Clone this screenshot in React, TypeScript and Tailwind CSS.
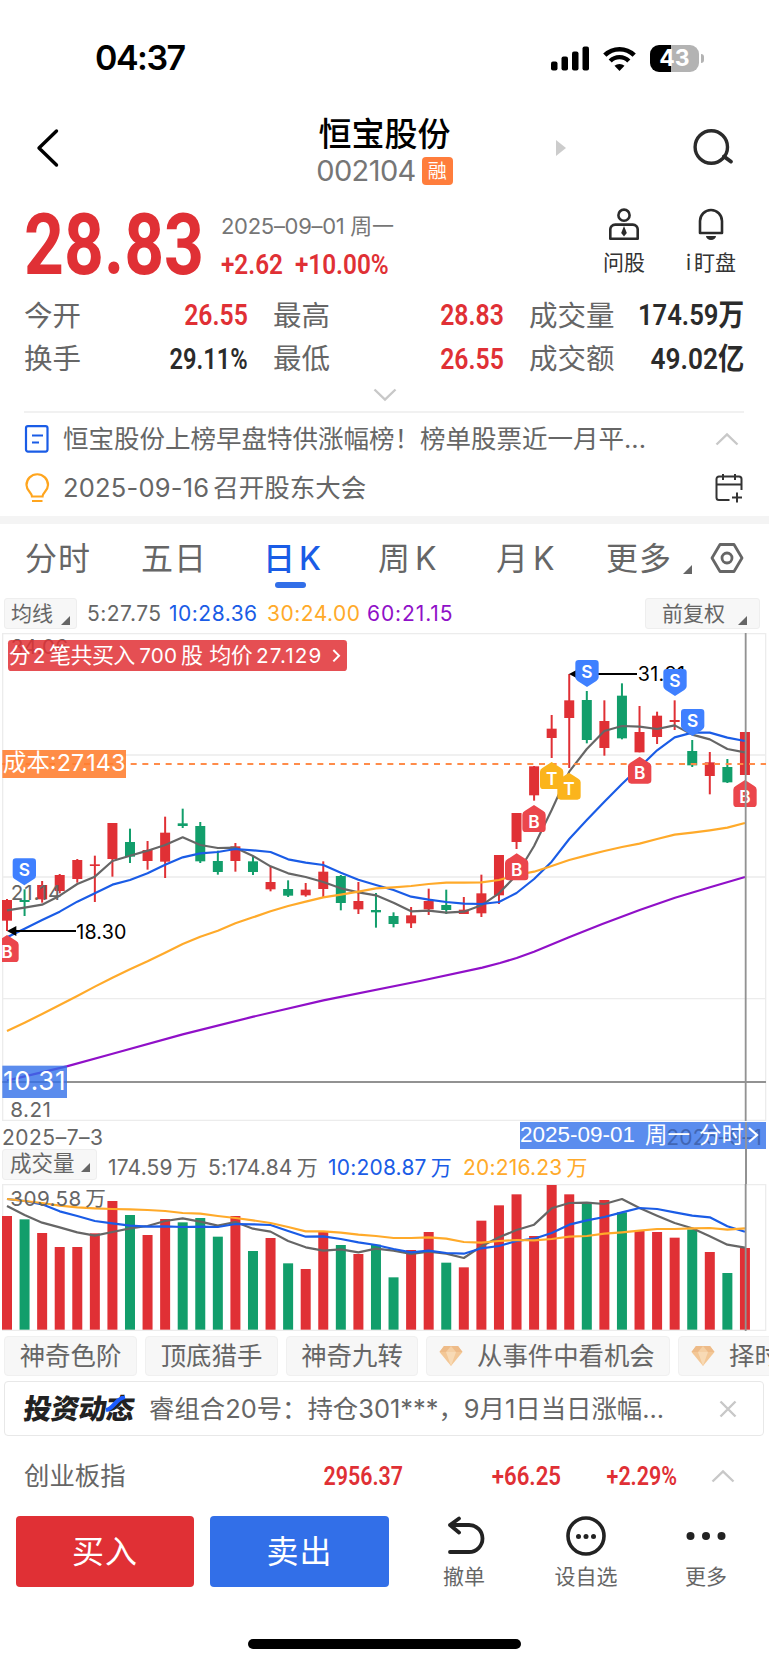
import type { ReactNode } from "react";
import clsx from "clsx";

/* ------------------------------------------------------------------ */
/*  Chart data                                                          */
/* ------------------------------------------------------------------ */

const RED = "#e03035";
const GREEN = "#129e6b";
const GRAY = "#666666";
const BLUE = "#1a5ce6";
const ORANGE = "#ffaa2a";
const PURPLE = "#9010c8";

const FIRST_X = 21;
const STEP = 52.71;

// [rising, high, bodyTop, bodyBottom, low]
type Candle = [number, number, number, number, number];

const candles: Candle[] = [
  [1, 477, 480, 542, 573],
  [0, 448, 480, 486, 528],
  [1, 423, 435, 478, 488],
  [1, 402, 405, 453, 460],
  [1, 357, 360, 417, 428],
  [1, 347, 373, 378, 486],
  [1, 249, 249, 357, 410],
  [0, 266, 306, 350, 369],
  [1, 303, 330, 363, 389],
  [1, 230, 278, 365, 414],
  [0, 206, 250, 258, 264],
  [0, 246, 258, 364, 369],
  [0, 332, 363, 396, 404],
  [1, 309, 319, 363, 395],
  [0, 348, 364, 396, 405],
  [1, 378, 426, 448, 454],
  [0, 421, 447, 467, 471],
  [1, 429, 449, 466, 470],
  [1, 364, 395, 447, 472],
  [0, 405, 408, 489, 511],
  [1, 426, 483, 508, 522],
  [0, 459, 510, 517, 563],
  [0, 517, 528, 552, 562],
  [1, 501, 526, 550, 564],
  [1, 446, 483, 508, 525],
  [0, 449, 495, 510, 522],
  [1, 471, 509, 522, 522],
  [1, 404, 460, 520, 531],
  [1, 345, 345, 466, 492],
  [1, 219, 219, 306, 327],
  [1, 78, 79, 166, 182],
  [1, -75, -34, -6, 54],
  [1, -198, -119, -66, 84],
  [0, -147, -120, 0, 10],
  [1, -119, -57, 24, 47],
  [0, -170, -133, -5, -2],
  [1, -102, -24, 37, 37],
  [1, -85, -73, -9, 12],
  [1, -119, -60, -54, -30],
  [0, 0, 33, 76, 81],
  [1, 36, 67, 108, 163],
  [0, 57, 81, 127, 129],
  [1, -24, -24, 105, 105],
];

const ma5 = [
  511, 503, 494, 467, 432, 410, 363, 347, 332, 315, 292, 315, 324, 323, 348, 379, 400, 411, 426, 445, 457, 466,
  488, 514, 512, 518, 515, 496, 460, 405, 318, 210, 95, 27, -27, -42, -40, -33, -44, -16, -2, 27, 37,
];
const ma10 = [
  592, 566, 540, 515, 485, 460, 434, 420, 400, 374, 352, 340, 336, 327, 331, 336, 358, 368, 375, 398, 419, 435,
  450, 470, 479, 486, 491, 492, 486, 459, 417, 365, 297, 240, 185, 132, 82, 31, -8, -22, -22, -7, 3,
];
const ma30 = [
  873, 848, 822, 795, 768, 740, 713, 688, 664, 638, 612, 590, 572, 550, 532, 514, 498, 485, 472, 464, 455, 445,
  442, 438, 432, 428, 428, 427, 420, 405, 395, 378, 360, 346, 333, 321, 311, 297, 284, 278, 271, 263, 249,
];
const ma60 =
  "21,1022 200,979 335,942 548,883 760,830 970,781 1260,723 1447,683 1500,669 1550,654 1602,635 1707,592 1807,552 1919,510 2025,473 2130,442 2235,411";

const volumes = [
  498, 508, 549, 591, 591, 550, 453, 495, 555, 507, 517, 504, 560, 498, 603, 564, 640, 657, 546, 585, 612, 584,
  682, 600, 546, 638, 652, 512, 466, 433, 558, 405, 433, 460, 450, 487, 541, 546, 563, 538, 606, 669, 594,
];
const vol5 = [
  468, 495, 518, 532, 547, 557, 546, 535, 528, 513, 505, 515, 527, 516, 536, 545, 573, 592, 602, 598, 607, 596,
  602, 612, 605, 611, 624, 589, 562, 540, 524, 475, 459, 458, 462, 447, 474, 497, 519, 535, 559, 584, 593,
];
const vol10 = [
  447, 453, 463, 484, 498, 513, 520, 527, 530, 529, 531, 530, 531, 522, 523, 525, 543, 560, 559, 567, 577, 585,
  597, 607, 602, 609, 611, 595, 588, 573, 566, 549, 524, 511, 501, 487, 474, 477, 487, 497, 502, 529, 545,
];
const vol20 = [
  447, 453, 459, 467, 472, 475, 477, 478, 480, 483, 489, 491, 498, 504, 511, 519, 531, 544, 544, 548, 554, 558,
  564, 564, 562, 566, 576, 578, 573, 570, 571, 567, 560, 558, 551, 547, 542, 537, 537, 535, 534, 539, 535,
];

const markers = [
  { x: 1761, y: -240, kind: "S" },
  { x: 2025, y: -213, kind: "S" },
  { x: 2078, y: -93, kind: "S" },
  { x: 73, y: 355, kind: "S" },
  { x: 21, y: 585, kind: "B" },
  { x: 1550, y: 340, kind: "B" },
  { x: 1602, y: 195, kind: "B" },
  { x: 1919, y: 50, kind: "B" },
  { x: 2235, y: 120, kind: "B" },
  { x: 1655, y: 66, kind: "T" },
  { x: 1707, y: 98, kind: "T" },
];

const xAt = (i: number) => FIRST_X + i * STEP;
const toPoints = (values: number[]) => values.map((v, i) => `${xAt(i).toFixed(1)},${v}`).join(" ");

/* ------------------------------------------------------------------ */
/*  Small pieces                                                        */
/* ------------------------------------------------------------------ */

// Condensed numerals used for prices
function Num({ children, className }: { children: ReactNode; className?: string }) {
  return (
    <span
      className={clsx(
        "inline-block whitespace-nowrap font-[Roboto,'Noto_Sans_CJK_SC',sans-serif] leading-none",
        className,
      )}
    >
      {children}
    </span>
  );
}

function Corner({ className }: { className?: string }) {
  return (
    <svg viewBox="0 0 9 9" className={clsx("h-[9px] w-[9px] fill-[#666]", className)}>
      <path d="M9 0v9H0z" />
    </svg>
  );
}

function Chevron({ down, className }: { down?: boolean; className?: string }) {
  return (
    <svg viewBox="0 0 24 14" fill="none" stroke="#c8c8c8" strokeWidth="2.400" className={clsx("h-[14px] w-6", className)}>
      <path d={down ? "M1.500 1.500 12 11.500 22.500 1.500" : "M1.500 12.500 12 2.500 22.500 12.500"} />
    </svg>
  );
}

function Gem() {
  return (
    <svg viewBox="0 0 24 22" className="h-[22px] w-6 shrink-0">
      <path d="M5 1h14l4.500 6L12 21 .5 7z" fill="#f3c796" />
      <path d="M5 1h14l4.500 6H.5z" fill="#eebb88" />
      <path d="M7 7h10l-5 14z" fill="#f8dab5" />
      <path d="M7 7l5-6 5 6z" fill="#f5cfa3" />
    </svg>
  );
}

function Marker({ x, y, kind }: { x: number; y: number; kind: string }) {
  const sell = kind === "S";
  const fill = sell ? "#3f80ff" : kind === "B" ? "#eb464c" : "#fbb41c";
  const d = sell
    ? "M-25 0H25Q35 0 35 10V52Q35 59 28 63L0 81L-28 63Q-35 59-35 52V10Q-35 0-25 0Z"
    : "M-25 81H25Q35 81 35 71V29Q35 22 28 18L0 0L-28 18Q-35 22-35 29V71Q-35 81-25 81Z";
  return (
    <g transform={`translate(${x} ${y})`}>
      <path d={d} fill={fill} />
      <text y={sell ? 53 : 68} textAnchor="middle" fontSize="52" fontWeight="600" fill="#fff">
        {kind}
      </text>
    </g>
  );
}

/* ------------------------------------------------------------------ */
/*  Header                                                              */
/* ------------------------------------------------------------------ */

function StatusBar() {
  return (
    <div className="flex h-[112px] shrink-0 items-center justify-between pt-1 pr-[70px] pl-[95px] text-black">
      <span className="text-[34px] leading-none font-semibold tracking-[-1.500px]">04:37</span>
      <div className="flex items-center">
        <svg viewBox="0 0 38 25" className="h-[25px] w-[38px]">
          <rect x="0" y="15.500" width="6.500" height="9" rx="2" />
          <rect x="10.500" y="10.500" width="6.500" height="14" rx="2" />
          <rect x="21" y="5.500" width="6.500" height="19" rx="2" />
          <rect x="31.500" y="0.500" width="6.500" height="24" rx="2" />
        </svg>
        <svg viewBox="0 0 33 25" fill="none" stroke="#000" className="ml-[14px] h-[25px] w-[33px]">
          <path d="M1.800 9.200A21 21 0 0 1 31.200 9.200" strokeWidth="4.600" />
          <path d="M7.200 15A13 13 0 0 1 25.800 15" strokeWidth="4.400" />
          <path d="M16.500 25l-5-5.200a7.500 7.500 0 0 1 10 0z" fill="#000" stroke="none" />
        </svg>
        <div className="relative ml-[14px] flex h-[27px] w-[49px] items-center justify-center rounded-[9px] bg-[linear-gradient(90deg,#000_43%,#b3b3b3_43%)] text-[23px] leading-none font-bold text-white">
          43
          <span className="absolute top-[9px] -right-[5px] h-[9px] w-[3px] rounded-r-full bg-[#b3b3b3]" />
        </div>
      </div>
    </div>
  );
}

function TitleBar() {
  return (
    <div className="relative flex h-[84px] shrink-0 flex-col items-center">
      <svg viewBox="0 0 24 40" fill="none" stroke="#000" className="absolute top-4 left-[36px] h-10 w-6">
        <path d="M20.500 3 3 20l17.500 17" strokeWidth="3.400" strokeLinecap="round" strokeLinejoin="round" />
      </svg>
      <h1 className="mt-[3px] text-[33px] leading-[38px] font-medium text-black">恒宝股份</h1>
      <div className="mt-[4px] flex items-center gap-[6px]">
        <span className="text-[29px] leading-7 tracking-[-0.600px] text-[#767676]">002104</span>
        <span className="flex h-7 w-[31px] items-center justify-center rounded-[4px] bg-[#ff7d3c] text-[19px] leading-none text-white">
          融
        </span>
      </div>
      <svg viewBox="0 0 10 16" className="absolute top-[28px] left-[556px] h-4 w-[10px] fill-[#ccc]">
        <path d="M0 0l10 8-10 8z" />
      </svg>
      <svg viewBox="0 0 40 38" fill="none" stroke="#2b2b2b" className="absolute top-[16px] left-[693px] h-[38px] w-10">
        <circle cx="18.300" cy="19" r="16.200" strokeWidth="3.400" />
        <path d="M31 28.500l6.800 5" strokeWidth="4" strokeLinecap="round" />
      </svg>
    </div>
  );
}

function Quote() {
  const stats = [
    { label: "今开", value: "26.55", red: true },
    { label: "最高", value: "28.83", red: true },
    { label: "成交量", value: "174.59万" },
    { label: "换手", value: "29.11%" },
    { label: "最低", value: "26.55", red: true },
    { label: "成交额", value: "49.02亿" },
  ];

  return (
    <section className="h-[215px] shrink-0 px-6 pt-[10px]">
      <div className="flex h-[88px]">
        <Num className="-mt-[4px] w-[197px] origin-left scale-x-[0.81] text-[86px] font-bold text-[#e03035]">28.83</Num>
        <div className="flex flex-col pt-[9px]">
          <span className="text-[22px] leading-[22px] tracking-[-0.300px] whitespace-pre text-[#767676]">
            2025–09–01 周一
          </span>
          <Num className="mt-[15px] origin-left scale-x-[0.9] text-[27px] font-semibold text-[#e03035]">
            +2.62&nbsp; +10.00%
          </Num>
        </div>
        <div className="mr-[4px] ml-auto flex text-[21px] leading-6 text-[#333]">
          <div className="flex w-[60px] flex-col items-center">
            <svg viewBox="0 0 30 32" fill="none" stroke="#2b2b2b" strokeWidth="2.600" className="mt-[2px] h-8 w-[30px]">
              <circle cx="15" cy="7.200" r="5.600" />
              <path d="M1.300 30.700V22a5 5 0 0 1 5-5.400h17.400a5 5 0 0 1 5 5.400v8.700z" strokeLinejoin="round" />
              <path d="M15 18l2.800 7-2.800 3.500-2.800-3.500z" fill="#2b2b2b" stroke="none" />
            </svg>
            <span className="mt-[11px]">问股</span>
          </div>
          <div className="ml-[27px] flex w-[60px] flex-col items-center">
            <svg viewBox="0 0 26 32" fill="none" stroke="#2b2b2b" strokeWidth="2.600" className="mt-[2px] h-8 w-[26px]">
              <path d="M2 25V13a11 11 0 0 1 22 0v12z" strokeLinejoin="round" />
              <path d="M8 28h10a5 4 0 0 1-10 0z" fill="#2b2b2b" stroke="none" />
            </svg>
            <span className="mt-[11px] whitespace-nowrap">
              <span className="mr-[3px]">i</span>盯盘
            </span>
          </div>
        </div>
      </div>

      <div className="grid grid-cols-[224px_231px_215px] gap-x-[25px] text-[28.500px]">
        {stats.map((s) => (
          <div key={s.label} className="flex h-[43.500px] items-center justify-between leading-none text-[#666]">
            <span>{s.label}</span>
            <Num
              className={clsx(
                "origin-right text-[29.500px] font-semibold",
                s.red ? "scale-x-[0.84] text-[#e03035]" : "text-[#2b2b2b]",
                s.value.endsWith("%") && "scale-x-[0.8]",
                s.value.endsWith("万") && "scale-x-[0.87]",
                s.value.endsWith("亿") && "scale-x-[0.89]",
              )}
            >
              {s.value}
            </Num>
          </div>
        ))}
      </div>
      <Chevron down className="mx-auto mt-[7px]" />
    </section>
  );
}

function Notices() {
  return (
    <>
      <div className="ml-6 flex h-[105px] w-[720px] shrink-0 flex-col border-t-2 border-[#f1f1f1] text-[25.500px] leading-none text-[#666]">
        <div className="flex h-[51px] items-center pr-[5px]">
          <svg viewBox="0 0 26 28" fill="none" stroke="#1a5ce6" strokeWidth="2.200" className="h-7 w-[26px]">
            <rect x="2" y="1.100" width="21.500" height="25.500" rx="2" />
            <path d="M8 10.500h11M8 17.500h7" />
          </svg>
          <span className="ml-[13px]">恒宝股份上榜早盘特供涨幅榜！榜单股票近一月平...</span>
          <Chevron className="ml-auto" />
        </div>
        <div className="flex h-[47px] items-center">
          <svg viewBox="0 0 26 30" fill="none" stroke="#ffa51e" strokeWidth="2.200" className="h-[30px] w-[26px]">
            <path d="M8 23.500c0-4-5.500-5.500-5.500-11.500a10.700 10.700 0 0 1 21.500 0c0 6-5.500 7.500-5.500 11.500zM8 28h10.500" />
          </svg>
          <span className="ml-[13px] tracking-[0.200px]">2025-09-16</span>
          <span className="ml-[4px]">召开股东大会</span>
          <svg viewBox="0 0 28 30" fill="none" stroke="#333" strokeWidth="2" className="mr-px ml-auto h-[30px] w-7">
            <path d="M14.500 27H4a2.500 2.500 0 0 1-2.500-2.500V6A2.500 2.500 0 0 1 4 3.500h20A2.500 2.500 0 0 1 26.500 6v11M1.500 11.500h25M8 1v6M20 1v6M17 24.500h10M22 19.500v10" />
          </svg>
        </div>
      </div>
      <div className="h-[8px] shrink-0 bg-[#f4f4f4]" />
    </>
  );
}

/* ------------------------------------------------------------------ */
/*  Chart                                                               */
/* ------------------------------------------------------------------ */

function Tabs() {
  const tab = "text-[32px] leading-none tracking-[1px] text-[#666]";
  return (
    <nav className="flex h-[74px] shrink-0 items-start pt-[19px] pl-[25px]">
      <span className={clsx(tab, "w-[116px]")}>分时</span>
      <span className={clsx(tab, "w-[122px]")}>五日</span>
      <span className="flex w-[115px] flex-col text-[32px] leading-none font-medium text-[#1a5ce6]">
        <span className="flex gap-[4px]">
          <span>日</span>
          <span>K</span>
        </span>
        <i className="mt-[7px] ml-[12px] h-[6px] w-[31px] rounded-full bg-[#326fe8]" />
      </span>
      <span className={clsx(tab, "flex w-[118px] gap-[4px]")}>
        <span>周</span>
        <span>K</span>
      </span>
      <span className={clsx(tab, "flex w-[110px] gap-[4px]")}>
        <span>月</span>
        <span>K</span>
      </span>
      <span className={clsx(tab, "w-[66px]")}>更多</span>
      <Corner className="mt-[22px] ml-[11px]" />
      <svg viewBox="0 0 34 32" fill="none" stroke="#666" strokeWidth="2.800" className="mt-[-1px] ml-[18px] h-8 w-[34px]">
        <path d="M10 2.500h14L32 16l-8 13.500H10L2 16z" strokeLinejoin="round" />
        <circle cx="17" cy="16" r="5" />
      </svg>
    </nav>
  );
}

function AverageBar() {
  return (
    <div className="flex h-[35px] shrink-0 items-start pr-[9px] pl-1">
      <div className="flex h-[31px] w-[73px] items-center rounded-[3px] border border-[#eee] bg-[#f7f7f7] pl-[6px] text-[21px] leading-none text-[#666]">
        均线
        <Corner className="mt-[14px] ml-[8px]" />
      </div>
      <div className="flex h-[31px] items-center text-[21px] leading-none tracking-[0.500px]">
        <span className="ml-[10px] w-[82px] text-[#666]">5:27.75</span>
        <span className="w-[98px] text-[#1a5ce6]">10:28.36</span>
        <span className="w-[100px] text-[#ffaa2a]">30:24.00</span>
        <span className="tracking-[0.900px] text-[#9010c8]">60:21.15</span>
      </div>
      <div className="ml-auto flex h-[31px] w-[115px] items-center rounded-[3px] border border-[#eee] bg-[#f7f7f7] pl-[16px] text-[21px] leading-none text-[#666]">
        前复权
        <Corner className="mt-[14px] ml-[13px]" />
      </div>
    </div>
  );
}

function PriceChart() {
  return (
    <svg viewBox="0 -321 2307 1464" className="block h-[488px] w-[769px] shrink-0">
      <clipPath id="plot">
        <rect x="6" y="-321" width="2292" height="1464" />
      </clipPath>
      <g stroke="#ececec" strokeWidth="4" fill="none">
        <path d="M7-319H2298M7 45H2298M7 411H2298M7 776H2298M7 1141H2298" />
        <path d="M8-321V1143M2297-321V1143" />
      </g>

      <g clipPath="url(#plot)">
        {candles.map(([up, high, top, bottom, low], i) => (
          <g key={i} fill={up ? RED : GREEN}>
            <rect x={xAt(i) - 3} y={high} width="6" height={low - high} />
            <rect x={xAt(i) - 15} y={top} width="30" height={bottom - top} />
          </g>
        ))}
        <g fill="none" strokeWidth="6.500" strokeLinejoin="round">
          <polyline points={toPoints(ma5)} stroke={GRAY} />
          <polyline points={toPoints(ma10)} stroke={BLUE} />
          <polyline points={toPoints(ma30)} stroke={ORANGE} />
          <polyline points={ma60} stroke={PURPLE} />
        </g>
        <path d="M7 72H2298" stroke="#ff8c4a" strokeWidth="6" strokeDasharray="18 17" />
      </g>

      <g fontSize="59" fill="#000">
        <path d="M21 573l28-15v30zM45 570H228v6H45z" />
        <text x="229" y="597" textLength="150">18.30</text>
        <path d="M1707-198l28-15v30zM1730-201H1911v6H1730z" />
        <text x="1913" y="-176" textLength="142">31.91</text>
      </g>
      <g fontSize="62" fill="#666">
        <text x="32" y="-259" textLength="172">34.06</text>
        <text x="32" y="479" textLength="152">21.14</text>
        <text x="31" y="1132" textLength="122">8.21</text>
      </g>

      <g clipPath="url(#plot)">
        {markers.map((m, i) => (
          <Marker key={i} {...m} />
        ))}
      </g>
      <path d="M7 1026H2298M2237-321V1143" stroke="#929292" strokeWidth="5.500" />

      {/* price tags */}
      <rect x="24" y="-300" width="1017" height="93" rx="10" fill="#e03035" fillOpacity="0.85" />
      <g fontSize="66" fill="#fff">
        <text x="26" y="-230">分</text>
        <text x="98" y="-230" fontSize="62">2</text>
        <text x="147" y="-230" textLength="259">笔共买入</text>
        <text x="418" y="-230" fontSize="62" textLength="113">700</text>
        <text x="543" y="-230">股</text>
        <text x="628" y="-230" textLength="130">均价</text>
        <text x="768" y="-230" fontSize="62" textLength="196">27.129</text>
        <path d="M1000-270l17 17-17 17" fill="none" stroke="#fff" strokeWidth="6" />
      </g>
      <rect x="7" y="30" width="371" height="84" fill="#ff7d2e" fillOpacity="0.88" />
      <text x="9" y="94" fontSize="70" fill="#fff" textLength="367">成本:27.143</text>
      <rect x="7" y="977" width="194" height="97" fill="#326fe8" fillOpacity="0.8" />
      <text x="9" y="1051" fontSize="78" fill="#fff" textLength="188">10.31</text>
    </svg>
  );
}

function DateAxis() {
  return (
    <div className="flex h-7 shrink-0 items-center justify-between pr-[3px] pl-[2px] text-[21px] leading-none text-[#666]">
      <span className="pt-[4px] tracking-[0.500px]">2025–7–3</span>
      <div className="relative flex h-[27px] w-[246px] items-center bg-[#5b8dee] text-white">
        <span className="absolute top-[5px] right-[4px] tracking-[0.200px] text-[#4166b4]">2025–9–1</span>
        <span className="relative font-['Liberation_Sans','Noto_Sans_CJK_SC',sans-serif] text-[22.500px] whitespace-nowrap">
          2025-09-01
        </span>
        <span className="relative ml-[10px] text-[22.500px]">周一</span>
        <span className="relative ml-[9px] text-[22.500px]">分时</span>
        <svg viewBox="0 0 12 18" fill="none" stroke="#fff" strokeWidth="2.200" className="relative ml-[3px] h-[18px] w-3">
          <path d="M2 2l8 7-8 7" />
        </svg>
        <i className="absolute top-0 left-[225px] h-full w-[2px] bg-[#8b93a5]" />
      </div>
    </div>
  );
}

function VolumeBar() {
  const items = [
    { value: "174.59", className: "w-[100px]" },
    { value: "5:174.84", className: "w-[120px]" },
    { value: "10:208.87", className: "w-[135px] text-[#1a5ce6]" },
    { value: "20:216.23", className: "text-[#ffaa2a]" },
  ];
  return (
    <div className="relative flex h-[35px] shrink-0 items-start pl-[2px] leading-none text-[#666]">
      <div className="flex h-[31px] w-[95px] items-center rounded-[3px] border border-[#eee] bg-[#f7f7f7] pb-px pl-[7px] text-[21.500px]">
        成交量
        <Corner className="mt-[7px] ml-[6px]" />
      </div>
      <div className="mt-[8px] ml-[11px] flex text-[21px] tracking-[0.200px]">
        {items.map((item) => (
          <span key={item.value} className={clsx("flex gap-[4px]", item.className)}>
            <span>{item.value}</span>
            <span>万</span>
          </span>
        ))}
      </div>
      <i className="absolute top-0 left-[745px] h-full w-[2px] bg-[#929292]" />
    </div>
  );
}

function VolumeChart() {
  return (
    <svg viewBox="0 402 2307 441" className="block h-[147px] w-[769px] shrink-0">
      <clipPath id="volume-plot">
        <rect x="6" y="402" width="2292" height="441" />
      </clipPath>
      <path d="M7 404H2298M7 841H2298M8 402V843M2297 402V843" stroke="#ececec" strokeWidth="4" />
      <g clipPath="url(#volume-plot)">
        {volumes.map((top, i) => (
          <rect key={i} x={xAt(i) - 15} y={top} width="30" height={839 - top} fill={candles[i][0] ? RED : GREEN} />
        ))}
        <g fill="none" strokeWidth="6.500" strokeLinejoin="round">
          <polyline points={toPoints(vol5)} stroke={GRAY} />
          <polyline points={toPoints(vol10)} stroke={BLUE} />
          <polyline points={toPoints(vol20)} stroke={ORANGE} />
        </g>
      </g>
      <g fontSize="62" fill="#666">
        <text x="31" y="469" textLength="213">309.58</text>
        <text x="256" y="469">万</text>
      </g>
      <path d="M2237 402V843" stroke="#929292" strokeWidth="5.500" />
    </svg>
  );
}

/* ------------------------------------------------------------------ */
/*  Footer                                                              */
/* ------------------------------------------------------------------ */

function Chips() {
  const chip =
    "flex h-[40px] shrink-0 items-center rounded-[4px] border border-[#f0f0f0] bg-[#f7f7f7] text-[25.400px] leading-none text-[#666]";
  return (
    <div className="flex h-[50px] shrink-0 gap-[8px] overflow-hidden pt-[5px] pl-1 whitespace-nowrap">
      <span className={clsx(chip, "w-[133px] justify-center")}>神奇色阶</span>
      <span className={clsx(chip, "w-[133px] justify-center")}>顶底猎手</span>
      <span className={clsx(chip, "w-[132px] justify-center")}>神奇九转</span>
      <span className={clsx(chip, "w-[244px] gap-[14px] pl-[12px]")}>
        <Gem />
        从事件中看机会
      </span>
      <span className={clsx(chip, "w-[244px] gap-[14px] pl-[12px]")}>
        <Gem />
        择时
      </span>
    </div>
  );
}

function NewsCard() {
  return (
    <div className="ml-1 flex h-[55px] w-[760px] shrink-0 items-center rounded-[4px] border-[1.500px] border-[#e8e8e8] pr-[26px] pl-[19px] leading-none text-[#666]">
      <span className="relative w-[110px] text-[28px] font-black tracking-[-0.500px] whitespace-nowrap text-[#222]">
        <span className="inline-block -skew-x-8">投资动态</span>
        <svg viewBox="0 0 22 17" className="absolute top-[1px] left-[81px] h-[17px] w-[22px]" fill="none">
          <path d="M1 14C9 13 10 3 20 1" stroke="#1a5cff" strokeWidth="4.200" />
        </svg>
      </span>
      <span className="ml-[15px] text-[25.400px] whitespace-nowrap">睿组合20号：持仓301***，9月1日当日涨幅...</span>
      <svg viewBox="0 0 18 18" fill="none" stroke="#c8c8c8" strokeWidth="2.400" className="ml-auto h-[18px] w-[18px]">
        <path d="M1.500 1.500l15 15M16.500 1.500l-15 15" />
      </svg>
    </div>
  );
}

function IndexRow() {
  return (
    <div className="flex h-[80px] shrink-0 items-center pr-[34px] pl-6 text-[#e03035]">
      <span className="w-[200px] text-[25.400px] leading-none text-[#666]">创业板指</span>
      <Num className="w-[179px] origin-right scale-x-[0.84] pt-px text-right text-[25.500px] font-semibold">2956.37</Num>
      <Num className="w-[158px] origin-right scale-x-[0.87] pt-px text-right text-[25.500px] font-semibold">+66.25</Num>
      <Num className="w-[116px] origin-right scale-x-[0.84] pt-px text-right text-[25.500px] font-semibold">+2.29%</Num>
      <Chevron className="ml-auto" />
    </div>
  );
}

function Actions() {
  return (
    <div className="flex h-[71px] shrink-0 pl-4 text-[21px] leading-none text-[#666]">
      <button className="w-[178px] rounded-[4px] bg-[#e03035] text-[32px] tracking-[1px] text-white">买入</button>
      <button className="ml-4 w-[179px] rounded-[4px] bg-[#326fe8] text-[32px] tracking-[1px] text-white">卖出</button>
      <div className="ml-[30px] flex w-[90px] flex-col items-center">
        <svg viewBox="0 0 40 40" fill="none" stroke="#222" strokeWidth="3.800" className="ml-[5px] h-10 w-10" strokeLinecap="round" strokeLinejoin="round">
          <path d="M3 9H22a13.500 13.500 0 0 1 0 27H3M12 2.500 3 9l9 7.500" />
        </svg>
        <span className="mt-[10px]">撤单</span>
      </div>
      <div className="ml-[32px] flex w-[90px] flex-col items-center">
        <svg viewBox="0 0 40 40" className="h-10 w-10 fill-[#222]">
          <circle cx="20" cy="20" r="18" fill="none" stroke="#222" strokeWidth="3.600" />
          <circle cx="12.500" cy="20.500" r="2.500" />
          <circle cx="20" cy="20.500" r="2.500" />
          <circle cx="27.500" cy="20.500" r="2.500" />
        </svg>
        <span className="mt-[10px]">设自选</span>
      </div>
      <div className="ml-[30px] flex w-[90px] flex-col items-center">
        <svg viewBox="0 0 40 40" className="h-10 w-10 fill-[#222]">
          <circle cx="4.500" cy="20" r="4" />
          <circle cx="20" cy="20" r="4" />
          <circle cx="35.500" cy="20" r="4" />
        </svg>
        <span className="mt-[10px]">更多</span>
      </div>
    </div>
  );
}

export default function App() {
  return (
    <main className="flex h-[1665px] w-[769px] flex-col overflow-hidden bg-white font-[Inter,'Noto_Sans_CJK_SC',sans-serif]">
      <StatusBar />
      <TitleBar />
      <Quote />
      <Notices />
      <Tabs />
      <AverageBar />
      <PriceChart />
      <DateAxis />
      <VolumeBar />
      <VolumeChart />
      <Chips />
      <NewsCard />
      <IndexRow />
      <Actions />
      <div className="mx-auto mt-[52px] h-[10px] w-[273px] shrink-0 rounded-full bg-black" />
    </main>
  );
}
